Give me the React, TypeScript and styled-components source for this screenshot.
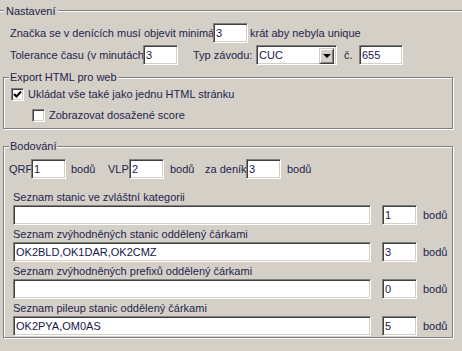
import { ReactNode } from 'react'
import styled, { createGlobalStyle } from 'styled-components'

const GlobalStyle = createGlobalStyle`
  html, body {
    margin: 0;
    padding: 0;
    background: #d4d0c8;
  }
  * {
    box-sizing: border-box;
  }
`

const LABEL = '#24244c'
const VALUE = '#16164a'

const Window = styled.div`
  width: 462px;
  height: 351px;
  overflow: hidden;
  background: #d4d0c8;
  font-family: 'Liberation Sans', Arial, sans-serif;
  font-size: 11px;
  color: ${LABEL};
  display: flex;
  flex-direction: column;
`

const TopTitleRow = styled.div`
  display: flex;
  align-items: center;
  height: 14px;
  margin-top: 4px;
`

const EtchedLine = styled.div<{ $width?: number }>`
  height: 2px;
  border-top: 1px solid #808080;
  border-bottom: 1px solid #ffffff;
  ${({ $width }) => ($width ? `width: ${$width}px;` : 'flex: 1;')}
`

const TitleText = styled.span`
  padding: 0 2px;
  line-height: 14px;
  white-space: nowrap;
`

const Row = styled.div<{ $top?: number; $left?: number }>`
  display: flex;
  align-items: center;
  height: 20px;
  margin-top: ${({ $top }) => $top ?? 0}px;
  padding-left: ${({ $left }) => $left ?? 0}px;
`

const Label = styled.span<{ $width?: number; $gap?: number }>`
  display: block;
  white-space: nowrap;
  flex: none;
  ${({ $width }) => ($width ? `width: ${$width}px;` : '')}
  margin-left: ${({ $gap }) => $gap ?? 0}px;
  line-height: 14px;
`

const Field = styled.div<{ $width: number; $gap?: number }>`
  flex: none;
  width: ${({ $width }) => $width}px;
  height: 20px;
  margin-left: ${({ $gap }) => $gap ?? 0}px;
  background: #ffffff;
  border-style: solid;
  border-width: 1px;
  border-color: #808080 #ffffff #ffffff #808080;
  box-shadow: inset 1px 1px 0 #404040, inset -1px -1px 0 #d4d0c8;
  padding: 2px 0 0 2px;
  color: ${VALUE};
  line-height: 14px;
  white-space: nowrap;
  overflow: hidden;
`

const Combo = styled(Field)`
  display: flex;
  align-items: flex-start;
  padding-right: 2px;
`

const ComboValue = styled.span`
  flex: 1;
`

const ComboButton = styled.div`
  width: 15px;
  height: 16px;
  background: #d4d0c8;
  border-style: solid;
  border-width: 1px;
  border-color: #d4d0c8 #404040 #404040 #d4d0c8;
  box-shadow: inset 1px 1px 0 #ffffff, inset -1px -1px 0 #808080;
  display: flex;
  align-items: center;
  justify-content: center;
`

const Arrow = styled.div`
  width: 0;
  height: 0;
  border-left: 4px solid transparent;
  border-right: 4px solid transparent;
  border-top: 4px solid #000000;
`

const GroupBox = styled.div<{ $top: number }>`
  position: relative;
  flex: none;
  margin: ${({ $top }) => $top}px 9px 0 3px;
  border: 1px solid #808080;
  box-shadow: inset 1px 1px 0 #ffffff, 1px 1px 0 #ffffff;
`

const Legend = styled.span`
  position: absolute;
  left: 5px;
  top: -8px;
  padding: 0 1px;
  background: #d4d0c8;
  line-height: 14px;
  white-space: nowrap;
`

const GroupBody = styled.div<{ $pt: number; $pb: number }>`
  display: flex;
  flex-direction: column;
  padding: ${({ $pt }) => $pt}px 0 ${({ $pb }) => $pb}px 0;
`

const CheckRow = styled.label<{ $left: number; $top?: number }>`
  display: flex;
  align-items: center;
  height: 18px;
  margin-top: ${({ $top }) => $top ?? 0}px;
  padding-left: ${({ $left }) => $left}px;
  gap: 4px;
  white-space: nowrap;
`

const CheckBox = styled.span`
  width: 13px;
  height: 13px;
  flex: none;
  background: #ffffff;
  border-style: solid;
  border-width: 1px;
  border-color: #808080 #ffffff #ffffff #808080;
  box-shadow: inset 1px 1px 0 #404040, inset -1px -1px 0 #d4d0c8;
  display: flex;
  align-items: center;
  justify-content: center;
`

const Spacer = styled.div<{ $h: number }>`
  height: ${({ $h }) => $h}px;
`

const ListLabel = styled.div`
  height: 17px;
  padding: 2px 0 0 9px;
  line-height: 14px;
  white-space: nowrap;
`

const ListRow = styled.div`
  display: flex;
  align-items: center;
  height: 20px;
  padding-left: 9px;
`

const Check = ({ checked, left, top, children }: { checked?: boolean; left: number; top?: number; children: ReactNode }) => (
  <CheckRow $left={left} $top={top}>
    <CheckBox>
      {checked && (
        <svg width="9" height="9" viewBox="0 0 9 9">
          <path d="M1 4 L3.5 6.5 L8 1.5" stroke="#000" strokeWidth="2" fill="none" />
        </svg>
      )}
    </CheckBox>
    {children}
  </CheckRow>
)

const lists = [
  { label: 'Seznam stanic ve zvláštní kategorii', value: '', points: '1' },
  { label: 'Seznam zvýhodněných stanic oddělený čárkami', value: 'OK2BLD,OK1DAR,OK2CMZ', points: '3' },
  { label: 'Seznam zvýhodněných prefixů oddělený čárkami', value: '', points: '0' },
  { label: 'Seznam pileup stanic oddělený čárkami', value: 'OK2PYA,OM0AS', points: '5' }
]

const App = () => {
  return (
    <Window>
      <GlobalStyle />
      <TopTitleRow>
        <EtchedLine $width={4} />
        <TitleText>Nastavení</TitleText>
        <EtchedLine />
      </TopTitleRow>
      <Row $top={5} $left={10}>
        <Label $width={203}>Značka se v denících musí objevit minimá</Label>
        <Field $width={35}>3</Field>
        <Label $gap={2}>krát aby nebyla unique</Label>
      </Row>
      <Row $top={2} $left={10}>
        <Label $width={133}>Tolerance času (v minutách</Label>
        <Field $width={35}>3</Field>
        <Label $width={63} $gap={15}>Typ závodu:</Label>
        <Combo $width={81}>
          <ComboValue>CUC</ComboValue>
          <ComboButton>
            <Arrow />
          </ComboButton>
        </Combo>
        <Label $width={15} $gap={7}>č.</Label>
        <Field $width={44}>655</Field>
      </Row>

      <GroupBox $top={12}>
        <Legend>Export HTML pro web</Legend>
        <GroupBody $pt={7} $pb={4}>
          <Check checked left={7}>
            Ukládat vše také jako jednu HTML stránku
          </Check>
          <Check left={28} top={3}>
            Zobrazovat dosažené score
          </Check>
        </GroupBody>
      </GroupBox>

      <GroupBox $top={17}>
        <Legend>Bodování</Legend>
        <GroupBody $pt={12} $pb={1}>
          <Row $left={5}>
            <Label $width={22}>QRF</Label>
            <Field $width={35}>1</Field>
            <Label $width={37} $gap={5}>bodů</Label>
            <Label $width={21}>VLP</Label>
            <Field $width={35}>2</Field>
            <Label $width={35} $gap={6}>bodů</Label>
            <Label $width={41}>za deník</Label>
            <Field $width={35}>3</Field>
            <Label $gap={6}>bodů</Label>
          </Row>
          <Spacer $h={9} />
          {lists.map((l) => (
            <div key={l.label}>
              <ListLabel>{l.label}</ListLabel>
              <ListRow>
                <Field $width={358}>{l.value}</Field>
                <Field $width={35} $gap={11}>
                  {l.points}
                </Field>
                <Label $gap={6}>bodů</Label>
              </ListRow>
            </div>
          ))}
        </GroupBody>
      </GroupBox>
    </Window>
  )
}

export default App
